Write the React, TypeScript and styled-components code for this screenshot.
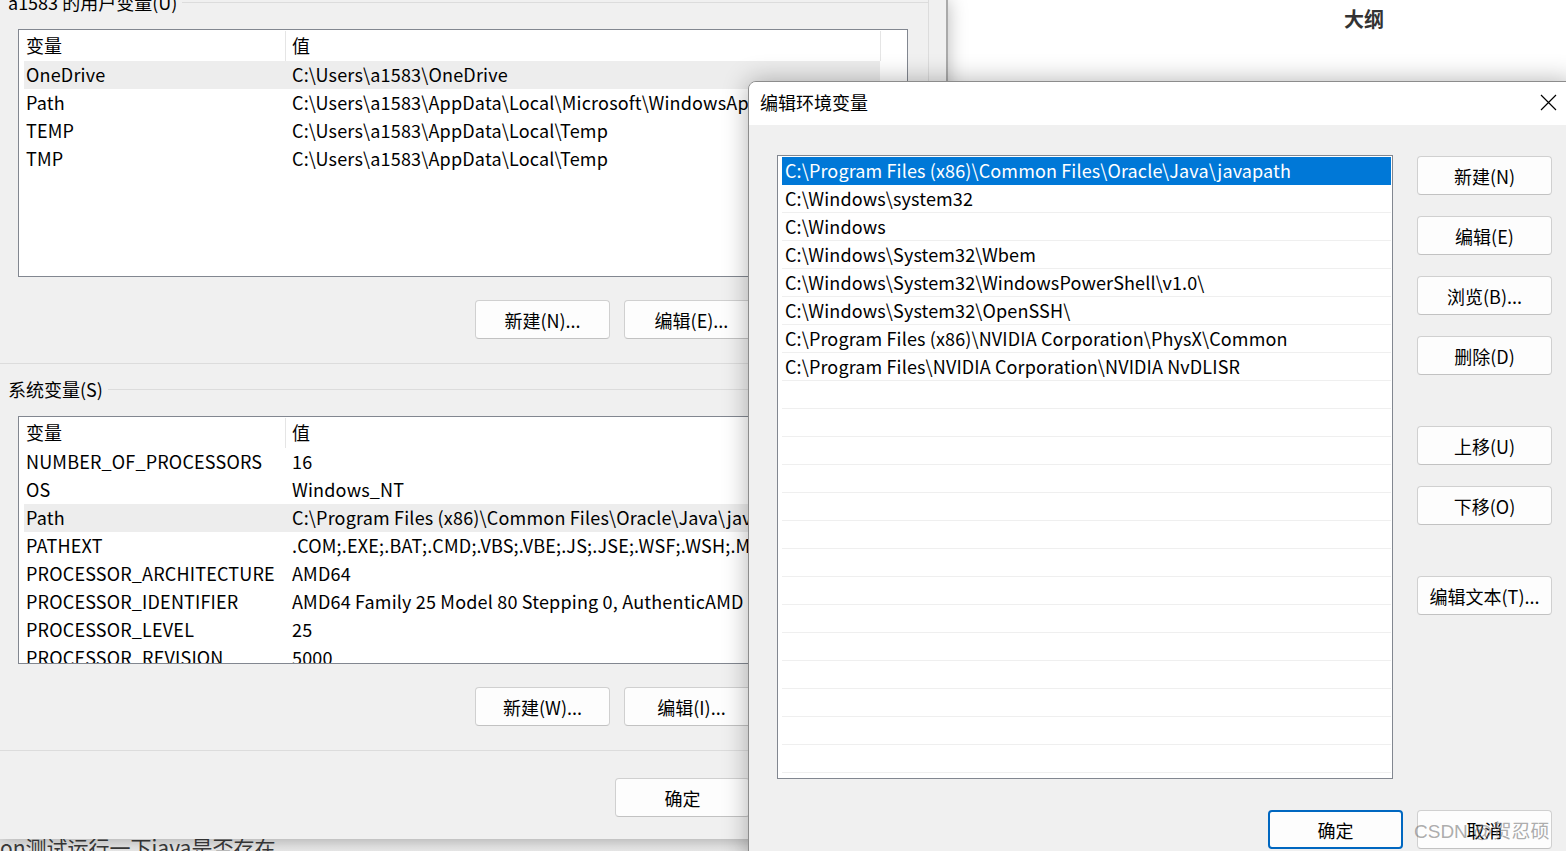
import React from "react";
import styled, { createGlobalStyle } from "styled-components";

const Global = createGlobalStyle`
  html, body { margin: 0; padding: 0; }
  body { font-family: "Noto Sans CJK SC", "Noto Sans", sans-serif; color: #000; }
  * { box-sizing: border-box; }
`;

const Screen = styled.div`
  position: relative;
  width: 1566px;
  height: 851px;
  overflow: hidden;
  background: #fff;
`;

/* ---------- background editor app ---------- */
const Editor = styled.div`
  position: absolute;
  inset: 0;
  display: flex;
  background: #fff;
`;
const EditorMain = styled.div`
  flex: 1;
  padding-top: 832px;
  padding-left: 0;
  font-size: 21px;
  line-height: 30px;
  color: #3a3a3a;
  white-space: nowrap;
  background: linear-gradient(to bottom, #fff 0, #fff 838px, #e2e2e2 838px, #ececec 851px);
`;
const Sidebar = styled.div`
  width: 404px;
  padding-top: 4px;
  text-align: center;
  font-size: 20px;
  font-weight: 700;
  color: #333;
`;

/* ---------- back window: environment variables ---------- */
const BackWindow = styled.div`
  position: absolute;
  left: 0;
  top: 0;
  width: 948px;
  height: 839px;
  background: #f0f0f0;
  border-right: 2px solid #a9a9a9;
  box-shadow: 0 0 18px rgba(0, 0, 0, 0.28);
  padding-right: 17px;
  display: flex;
  flex-direction: column;
  font-size: 18px;
`;

const Group = styled.section<{ $top: number }>`
  margin-top: ${(p) => p.$top}px;
  border-right: 1px solid #dcdcdc;
  border-bottom: 1px solid #dcdcdc;
`;
const GroupHeader = styled.div`
  display: flex;
  align-items: center;
  height: 24px;
`;
const GroupLabel = styled.span`
  padding: 0 5px 0 8px;
  font-size: 18px;
  line-height: 24px;
  white-space: nowrap;
`;
const Rule = styled.div`
  flex: 1;
  height: 1px;
  background: #dcdcdc;
`;
const GroupBody = styled.div`
  padding: 15px 20px 24px 18px;
`;

const ListView = styled.div`
  height: 248px;
  background: #fff;
  border: 1px solid #828790;
  padding-top: 1px;
  overflow: hidden;
`;
const LVHeader = styled.div`
  display: grid;
  grid-template-columns: 262px 595px;
  height: 30px;
  padding-left: 5px;
`;
const LVHeadCell = styled.div<{ $pad: number }>`
  padding-left: ${(p) => p.$pad}px;
  border-right: 1px solid #e5e5e5;
  line-height: 29px;
`;
const LVRow = styled.div<{ $sel?: boolean }>`
  display: grid;
  grid-template-columns: 266px 1fr;
  width: 856px;
  margin-left: 5px;
  height: 28px;
  line-height: 27px;
  letter-spacing: 0.18px;
  background: ${(p) => (p.$sel ? "#ededed" : "transparent")};
  white-space: nowrap;
  overflow: hidden;
`;
const LVCell = styled.div`
  padding-left: 2px;
  overflow: hidden;
`;

const ButtonRow = styled.div<{ $top: number; $right?: number }>`
  display: flex;
  justify-content: flex-end;
  gap: 14px;
  margin-top: ${(p) => p.$top}px;
  padding-right: ${(p) => p.$right ?? 0}px;
`;

const WinButton = styled.button<{ $primary?: boolean }>`
  width: 135px;
  height: 39px;
  flex: none;
  background: #fdfdfd;
  border: ${(p) => (p.$primary ? "2px solid #0067c0" : "1px solid #d0d0d0")};
  border-bottom-color: ${(p) => (p.$primary ? "#0067c0" : "#c2c2c2")};
  border-radius: 4px;
  font-family: "Noto Sans CJK SC", "Noto Sans", sans-serif;
  font-size: 18px;
  color: #000;
  padding: 0;
  white-space: nowrap;
`;

/* ---------- front dialog ---------- */
const Dialog = styled.div`
  position: absolute;
  left: 748px;
  top: 81px;
  width: 826px;
  height: 790px;
  background: #f0f0f0;
  border: 1px solid #8c8c8c;
  border-top-left-radius: 8px;
  box-shadow: 0 0 26px rgba(0, 0, 0, 0.3);
  overflow: hidden;
  font-size: 18px;
`;
const TitleBar = styled.div`
  height: 43px;
  background: #fff;
  display: flex;
  align-items: center;
  padding-left: 11px;
`;
const Title = styled.span`
  font-size: 18px;
  line-height: 24px;
  margin-top: -3px;
`;
const CloseButton = styled.div`
  margin-left: auto;
  width: 50px;
  height: 43px;
  display: flex;
  align-items: center;
  justify-content: center;
  padding-bottom: 2px;
`;
const DialogBody = styled.div`
  display: grid;
  grid-template-columns: 616px 135px;
  column-gap: 24px;
  padding: 30px 23px 0 28px;
`;
const PathList = styled.div`
  height: 624px;
  background: #fff;
  border: 1px solid #828790;
  padding: 1px 1px 0 1px;
  overflow: hidden;
`;
const PathRow = styled.div<{ $sel?: boolean }>`
  height: 28px;
  line-height: 27px;
  margin-left: 3px;
  padding-left: 3px;
  letter-spacing: 0.13px;
  border-bottom: 1px solid ${(p) => (p.$sel ? "#0078d7" : "#efefef")};
  background: ${(p) => (p.$sel ? "#0078d7" : "#fff")};
  color: ${(p) => (p.$sel ? "#fff" : "#000")};
  white-space: nowrap;
  overflow: hidden;
`;
const SideButtons = styled.div`
  display: flex;
  flex-direction: column;
  padding-top: 1px;
`;
const SideButton = styled(WinButton)<{ $gap: number }>`
  margin-top: ${(p) => p.$gap}px;
`;
const DialogFooter = styled.div`
  grid-column: 1 / -1;
  display: flex;
  justify-content: flex-end;
  gap: 14px;
  margin-top: 31px;
`;

const Watermark = styled.div`
  position: absolute;
  left: 1414px;
  top: 819px;
  font-family: "Liberation Sans", "Noto Sans CJK SC", sans-serif;
  font-size: 19px;
  line-height: 26px;
  color: rgba(120, 120, 120, 0.62);
  white-space: nowrap;
  pointer-events: none;
`;

const userVars: [string, string][] = [
  ["OneDrive", "C:\\Users\\a1583\\OneDrive"],
  ["Path", "C:\\Users\\a1583\\AppData\\Local\\Microsoft\\WindowsApps;"],
  ["TEMP", "C:\\Users\\a1583\\AppData\\Local\\Temp"],
  ["TMP", "C:\\Users\\a1583\\AppData\\Local\\Temp"],
];

const sysVars: [string, string][] = [
  ["NUMBER_OF_PROCESSORS", "16"],
  ["OS", "Windows_NT"],
  ["Path", "C:\\Program Files (x86)\\Common Files\\Oracle\\Java\\javapath;C:\\Windows\\system32"],
  ["PATHEXT", ".COM;.EXE;.BAT;.CMD;.VBS;.VBE;.JS;.JSE;.WSF;.WSH;.MSC"],
  ["PROCESSOR_ARCHITECTURE", "AMD64"],
  ["PROCESSOR_IDENTIFIER", "AMD64 Family 25 Model 80 Stepping 0, AuthenticAMD"],
  ["PROCESSOR_LEVEL", "25"],
  ["PROCESSOR_REVISION", "5000"],
];

const paths = [
  "C:\\Program Files (x86)\\Common Files\\Oracle\\Java\\javapath",
  "C:\\Windows\\system32",
  "C:\\Windows",
  "C:\\Windows\\System32\\Wbem",
  "C:\\Windows\\System32\\WindowsPowerShell\\v1.0\\",
  "C:\\Windows\\System32\\OpenSSH\\",
  "C:\\Program Files (x86)\\NVIDIA Corporation\\PhysX\\Common",
  "C:\\Program Files\\NVIDIA Corporation\\NVIDIA NvDLISR",
];

const sideButtons: [string, number][] = [
  ["新建(N)", 0],
  ["编辑(E)", 21],
  ["浏览(B)...", 21],
  ["删除(D)", 21],
  ["上移(U)", 51],
  ["下移(O)", 21],
  ["编辑文本(T)...", 51],
];

function VarTable({ rows, selected }: { rows: [string, string][]; selected: string }) {
  return (
    <ListView>
      <LVHeader>
        <LVHeadCell $pad={2}>变量</LVHeadCell>
        <LVHeadCell $pad={6}>值</LVHeadCell>
      </LVHeader>
      {rows.map(([k, v]) => (
        <LVRow key={k} $sel={k === selected}>
          <LVCell>{k}</LVCell>
          <LVCell>{v}</LVCell>
        </LVRow>
      ))}
    </ListView>
  );
}

export default function App() {
  const emptyRows = Array.from({ length: 15 });
  return (
    <Screen>
      <Global />
      <Editor>
        <EditorMain>on测试运行一下java是否存在</EditorMain>
        <Sidebar>大纲</Sidebar>
      </Editor>

      <BackWindow>
        <Group $top={-10}>
          <GroupHeader>
            <GroupLabel>a1583 的用户变量(U)</GroupLabel>
            <Rule />
          </GroupHeader>
          <GroupBody>
            <VarTable rows={userVars} selected="OneDrive" />
            <ButtonRow $top={23}>
              <WinButton>新建(N)...</WinButton>
              <WinButton>编辑(E)...</WinButton>
              <WinButton>删除(D)</WinButton>
            </ButtonRow>
          </GroupBody>
        </Group>
        <Group $top={13}>
          <GroupHeader>
            <GroupLabel>系统变量(S)</GroupLabel>
            <Rule />
          </GroupHeader>
          <GroupBody>
            <VarTable rows={sysVars} selected="Path" />
            <ButtonRow $top={23}>
              <WinButton>新建(W)...</WinButton>
              <WinButton>编辑(I)...</WinButton>
              <WinButton>删除(L)</WinButton>
            </ButtonRow>
          </GroupBody>
        </Group>
        <ButtonRow $top={27} $right={30}>
          <WinButton>确定</WinButton>
          <WinButton>取消</WinButton>
        </ButtonRow>
      </BackWindow>

      <Dialog>
        <TitleBar>
          <Title>编辑环境变量</Title>
          <CloseButton>
            <svg width="17" height="17" viewBox="0 0 17 17">
              <path d="M1 1 L16 16 M16 1 L1 16" stroke="#000" strokeWidth="1.2" fill="none" />
            </svg>
          </CloseButton>
        </TitleBar>
        <DialogBody>
          <PathList>
            {paths.map((p, i) => (
              <PathRow key={p} $sel={i === 0}>
                {p}
              </PathRow>
            ))}
            {emptyRows.map((_, i) => (
              <PathRow key={"e" + i} />
            ))}
          </PathList>
          <SideButtons>
            {sideButtons.map(([label, gap]) => (
              <SideButton key={label} $gap={gap}>
                {label}
              </SideButton>
            ))}
          </SideButtons>
          <DialogFooter>
            <WinButton $primary>确定</WinButton>
            <WinButton>取消</WinButton>
          </DialogFooter>
        </DialogBody>
      </Dialog>

      <Watermark>CSDN @贺忍硕</Watermark>
    </Screen>
  );
}
